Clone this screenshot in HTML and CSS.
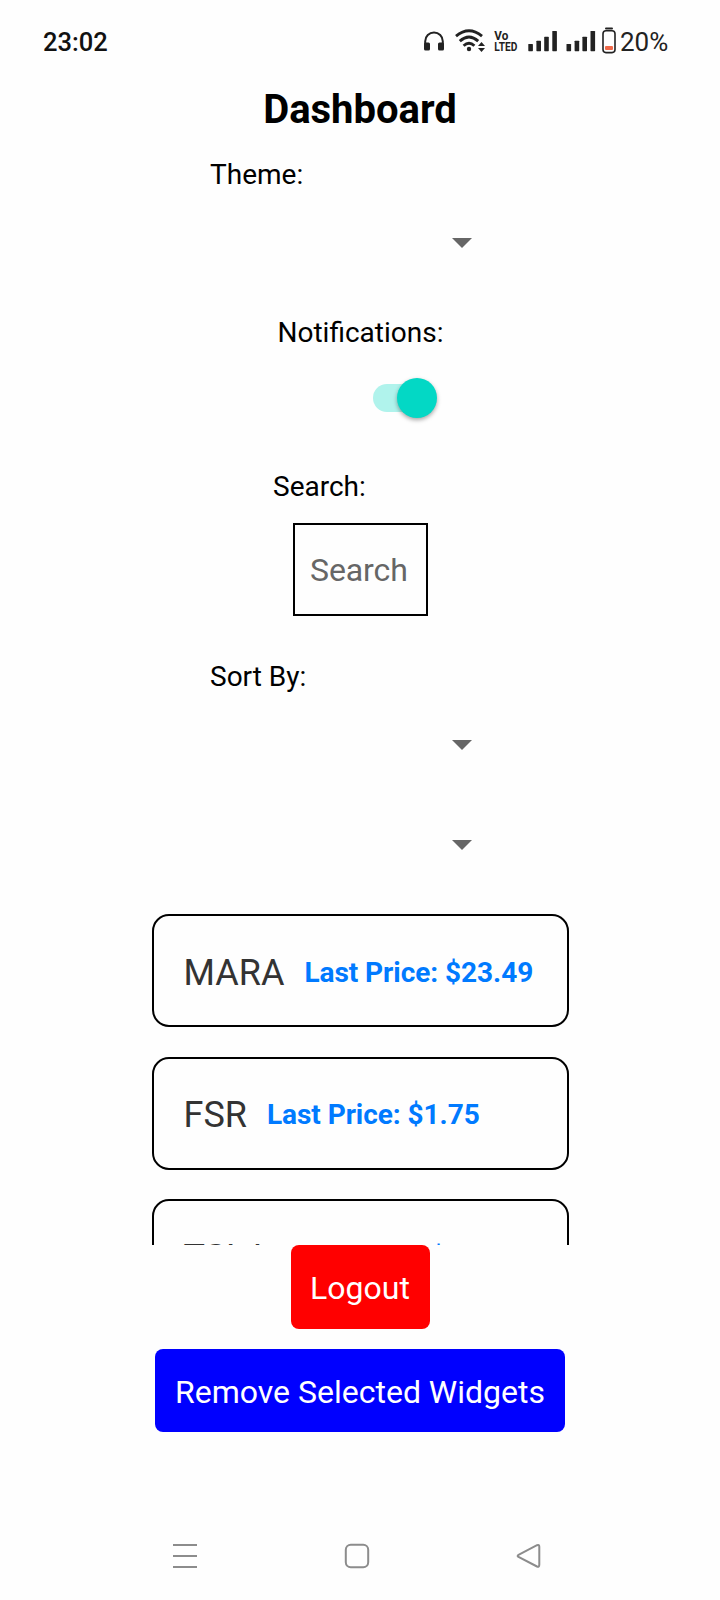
FILE: index.html
```html
<!DOCTYPE html>
<html lang="en">
<head>
<meta charset="utf-8">
<title>Dashboard</title>
<link rel="stylesheet" href="styles.css">
</head>
<body>
<header class="status">
  <span class="clock">23:02</span>
  <svg class="status-icons" width="200" height="34" viewBox="0 0 200 34" fill="#222">
    <!-- headphones -->
    <path d="M5.200 18 V13 A8.800 8.800 0 0 1 22.800 13 V18" transform="translate(0 -.8)" fill="none" stroke="#222" stroke-width="2"/>
    <rect x="4" y="13.500" width="6" height="8" rx="1.500"/>
    <rect x="18" y="13.500" width="6" height="8" rx="1.500"/>
    <!-- wifi -->
    <g fill="none" stroke="#222" stroke-width="2.900">
      <path d="M36 7.200 Q49 -3.600 62 7.200"/>
      <path d="M39.800 12.200 Q49 4 58.200 12.200"/>
      <path d="M43.600 16.800 Q49 11.800 54.400 16.800"/>
    </g>
    <circle cx="49" cy="20" r="2.200"/>
    <path d="M58 17 L61.500 13 L65 17z M58 19 L61.500 23 L65 19z"/>
    <!-- VoLTE -->
    <text class="volte"><tspan x="74.300" y="10.600" textLength="14" lengthAdjust="spacingAndGlyphs">Vo</tspan><tspan x="74.300" y="21.800" textLength="23" lengthAdjust="spacingAndGlyphs">LTED</tspan></text>
    <!-- signal strength -->
    <g id="signal">
      <rect x="108.300" y="15" width="4.600" height="7.200" rx=".6"/>
      <rect x="116.400" y="11.700" width="4.600" height="10.500" rx=".6"/>
      <rect x="124.200" y="7.700" width="4.600" height="14.500" rx=".6"/>
      <rect x="132.300" y="2" width="4.600" height="20.200" rx=".6"/>
    </g>
    <use href="#signal" x="38.200"/>
    <!-- battery -->
    <rect x="185" y="-1.400" width="8" height="2" rx="1"/>
    <rect x="183" y="1.800" width="12" height="21.800" rx="3" fill="#fff" stroke="#222" stroke-width="1.600"/>
    <rect x="185" y="17" width="8" height="4" rx="1" fill="#f0694a"/>
  </svg>
  <span class="battery">20%</span>
</header>

<main class="screen">
  <h1 class="title">Dashboard</h1>

  <section class="picker-group">
    <div class="label">Theme:</div>
    <div class="picker"><i class="caret"></i></div>
  </section>

  <section class="notify-group">
    <div class="label">Notifications:</div>
    <div class="switch"><i class="thumb"></i></div>
  </section>

  <section class="search-group">
    <div class="label">Search:</div>
    <div class="search">Search</div>
  </section>

  <section class="picker-group sort">
    <div class="label">Sort By:</div>
    <div class="picker"><i class="caret"></i></div>
    <div class="picker"><i class="caret"></i></div>
  </section>

  <section class="widgets">
    <article class="card"><span class="symbol">MARA</span><span class="price">Last Price: $23.49</span></article>
    <article class="card"><span class="symbol">FSR</span><span class="price">Last Price: $1.75</span></article>
    <article class="card"><span class="symbol">TSLA</span><span class="price">Last Price: $</span></article>
  </section>

  <div class="button logout">Logout</div>
  <div class="button remove">Remove Selected Widgets</div>
</main>

<nav class="navbar">
  <svg width="28" height="28" viewBox="0 0 28 28"><path d="M2 3H26M2 14H26M2 25H26"/></svg>
  <svg width="28" height="28" viewBox="0 0 28 28"><rect x="2.800" y="2.800" width="22.400" height="22.400" rx="5"/></svg>
  <svg width="28" height="28" viewBox="0 0 28 28"><path d="M3.500 12.800 L22 3.200 Q24.300 2.300 24.300 4.700 V22.500 Q24.300 25.500 22 24.500 L3.500 15 Q1.800 13.900 3.500 12.800Z"/></svg>
</nav>
</body>
</html>
```
FILE: styles.css
```css
* { box-sizing: border-box; }

body {
  margin: 0;
  width: 720px;
  height: 1600px;
  overflow: hidden;
  display: flex;
  flex-direction: column;
  background: #fefefe;
  color: #000;
  font-family: Roboto, "Liberation Sans", sans-serif;
}

.status {
  height: 82px;
  padding: 27px 50px 0 43px;
  display: flex;
  align-items: flex-start;
}
.clock { font-size: 25.500px; line-height: 30px; font-weight: 500; color: #111; }
.status-icons { margin: 2px 0 0 auto; overflow: visible; }
.volte { font-size: 12px; font-weight: 700; }
.battery { width: 50px; font-size: 26px; line-height: 30px; color: #222; white-space: nowrap; }

.screen {
  height: 1350px;
  display: flex;
  flex-direction: column;
  align-items: center;
}

.title { margin: 0 0 18px; font-size: 40px; line-height: 56px; font-weight: 700; }
.label { font-size: 28px; line-height: 38px; }

.picker-group { width: 300px; height: 158px; }
.picker {
  height: 100px;
  margin-top: -1px;
  padding-right: 38px;
  display: flex;
  align-items: center;
  justify-content: flex-end;
}
.picker + .picker { margin-top: 0; }
.caret {
  border: 10px solid transparent;
  border-top-color: #666;
  border-bottom: 0;
}

.notify-group { width: 165px; height: 154px; }
.switch {
  width: 56px;
  height: 28px;
  margin: 32px 0 0 95px;
  border-radius: 14px;
  background: #b0f3ec;
  display: flex;
  align-items: center;
}
.thumb {
  flex: none;
  width: 40px;
  height: 40px;
  margin-left: 24px;
  border-radius: 50%;
  background: #03d8c5;
  box-shadow: 0 2px 4px rgba(0, 0, 0, .35);
}

.search-group { width: 174px; height: 190px; }
.search {
  width: 135px;
  height: 93px;
  margin: 17px 0 0 20px;
  padding-left: 15px;
  border: 2px solid #000;
  font-size: 32px;
  line-height: 91px;
  letter-spacing: -.1px;
  color: #666;
}

.sort { height: 256px; }

.widgets {
  width: 417px;
  height: 331px;
  overflow: hidden;
  display: flex;
  flex-direction: column;
  gap: 29.500px;
}
.card {
  flex: none;
  height: 113px;
  padding: 4px 28px 0 30px;
  border: 2px solid #000;
  border-radius: 17px;
  display: flex;
  align-items: center;
  gap: 20px;
}
.symbol { font-size: 36px; line-height: 44px; color: #333; }
.price { font-size: 28px; line-height: 38px; font-weight: 700; color: #007aff; letter-spacing: -.05px; }

.button {
  height: 83px;
  border-radius: 8px;
  font-size: 32px;
  line-height: 86px;
  text-align: center;
  color: #fff;
  white-space: nowrap;
}
.logout { width: 139px; height: 84px; background: #f00; }
.remove { width: 410px; margin-top: 20px; background: #00f; }

.navbar {
  flex: 1;
  padding: 110px 177px 0 171px;
  display: flex;
  justify-content: space-between;
}
.navbar svg { fill: none; stroke: #8c8c8c; stroke-width: 2; }
```
